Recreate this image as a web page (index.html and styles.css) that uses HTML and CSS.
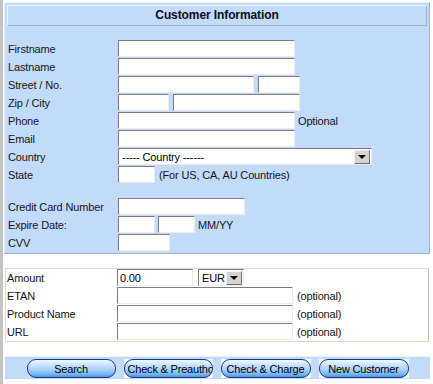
FILE: index.html
```html
<!DOCTYPE html>
<html>
<head>
<meta charset="utf-8">
<link rel="stylesheet" href="styles.css">
</head>
<body>
<div class="page">
  <div class="panel-blue">
    <div class="header">Customer Information</div>
    <div class="form">
      <div class="row"><span class="label">Firstname</span><span class="inp w177"></span></div>
      <div class="row"><span class="label">Lastname</span><span class="inp w177"></span></div>
      <div class="row"><span class="label">Street / No.</span><span class="inp w136"></span><span class="inp w42 gap4"></span></div>
      <div class="row"><span class="label">Zip / City</span><span class="inp w51"></span><span class="inp w127 gap4"></span></div>
      <div class="row"><span class="label">Phone</span><span class="inp w177"></span><span class="note n3">Optional</span></div>
      <div class="row"><span class="label">Email</span><span class="inp w177"></span></div>
      <div class="row"><span class="label">Country</span><span class="sel w254"><span class="sel-text">----- Country ------</span><span class="drop"><span class="tri"></span></span></span></div>
      <div class="row"><span class="label">State</span><span class="inp w37"></span><span class="note n4">(For US, CA, AU Countries)</span></div>
      <div class="spacer"></div>
      <div class="row"><span class="label">Credit Card Number</span><span class="inp w127"></span></div>
      <div class="row"><span class="label">Expire Date:</span><span class="inp w37"></span><span class="inp w37 gap3"></span><span class="note n3">MM/YY</span></div>
      <div class="row"><span class="label">CVV</span><span class="inp w52"></span></div>
    </div>
  </div>

  <div class="panel-white">
    <div class="row"><span class="label">Amount</span><span class="inp w76 val">0.00</span><span class="sel w46 gap5"><span class="sel-text">EUR</span><span class="drop"><span class="tri"></span></span></span></div>
    <div class="row"><span class="label">ETAN</span><span class="inp w176"></span><span class="note n4">(optional)</span></div>
    <div class="row"><span class="label">Product Name</span><span class="inp w176"></span><span class="note n4">(optional)</span></div>
    <div class="row"><span class="label">URL</span><span class="inp w176"></span><span class="note n4">(optional)</span></div>
  </div>

  <div class="bar">
    <span class="btn plain w89"><span class="pill">Search</span></span>
    <span class="btn w89"><span class="pill clip"><span class="clip-text">Check &amp; Preauthor</span></span></span>
    <span class="btn w90"><span class="pill">Check &amp; Charge</span></span>
    <span class="btn w90"><span class="pill">New Customer</span></span>
  </div>
</div>
</body>
</html>
```

FILE: styles.css
```css
* { box-sizing: border-box; }
html, body { margin: 0; padding: 0; background: #fff; }
body {
  font-family: "Liberation Sans", Arial, sans-serif;
  font-size: 11px;
  letter-spacing: -0.15px;
  color: #141414;
}
.page {
  width: 433px;
  height: 384px;
  overflow: hidden;
  border-left: 3px solid #c4c4c4;
  padding-top: 2px;
  display: flex;
  flex-direction: column;
}
.panel-blue {
  margin-left: 1px;
  width: 426px;
  background: #c3dbfb;
  border: 1px solid;
  border-color: #e6f2ff #9fb4d0 #9fb4d0 #e6f2ff;
  padding: 2px 2px 1px 2px;
}
.header {
  height: 21px;
  border: 1px solid;
  border-color: #eef6ff #98aecb #98aecb #eef6ff;
  text-align: center;
  font-weight: bold;
  font-size: 12px;
  letter-spacing: -0.1px;
  line-height: 19px;
  color: #0c0c1e;
}
.form {
  margin-top: 14px;
  padding-left: 1px;
}
.row {
  display: flex;
  align-items: flex-start;
  height: 18px;
}
.label {
  width: 110px;
  flex: none;
  line-height: 17px;
  padding-top: 1px;
  white-space: nowrap;
}
.spacer { height: 14px; }
.inp {
  display: block;
  flex: none;
  height: 17px;
  background: #fff;
  border: 1px solid;
  border-color: #7c7c7c #ececec #ececec #7c7c7c;
}
.val {
  line-height: 16px;
  padding-left: 2px;
  color: #000;
}
.gap3 { margin-left: 3px; }
.gap4 { margin-left: 4px; }
.gap5 { margin-left: 5px; }
.w37 { width: 37px; }
.w42 { width: 42px; }
.w46 { width: 46px; }
.w51 { width: 51px; }
.w52 { width: 52px; }
.w76 { width: 76px; }
.w127 { width: 127px; }
.w136 { width: 136px; }
.w176 { width: 176px; }
.w177 { width: 177px; }
.w254 { width: 254px; }
.note {
  line-height: 17px;
  padding-top: 1px;
  white-space: nowrap;
}
.n3 { margin-left: 3px; }
.n4 { margin-left: 4px; }
.sel {
  display: flex;
  align-items: center;
  justify-content: space-between;
  flex: none;
  height: 17px;
  background: #fff;
  border: 1px solid;
  border-color: #7c7c7c #ececec #ececec #7c7c7c;
  padding: 0 1px 0 3px;
  color: #000;
}
.sel-text { line-height: 15px; padding-top: 1px; white-space: nowrap; }
.drop {
  width: 16px;
  height: 14px;
  background: #d6d3ce;
  border: 1px solid;
  border-color: #f4f4f4 #6e6e6e #6e6e6e #f4f4f4;
  display: flex;
  align-items: center;
  justify-content: center;
}
.tri {
  width: 0;
  height: 0;
  border-left: 4px solid transparent;
  border-right: 4px solid transparent;
  border-top: 4px solid #000;
  margin-top: 1px;
}
.panel-white {
  margin-top: 14px;
  margin-left: 2px;
  width: 424px;
  background: #fff;
  border: 1px solid #f3d4b8;
  border-right-color: #dbbfa6;
  padding: 0 1px;
}
.bar {
  margin-top: 14px;
  margin-left: 2px;
  width: 425px;
  height: 23px;
  background: #c3dbfb;
  border-top: 1px solid #e6f2ff;
  padding-top: 2px;
  display: flex;
  justify-content: center;
  align-items: flex-start;
  gap: 8px;
}
.btn {
  display: block;
  height: 19px;
  background: #f4f9ff;
}
.btn.plain { background: transparent; }
.w89 { width: 89px; }
.w90 { width: 90px; }
.pill {
  display: flex;
  align-items: center;
  justify-content: center;
  width: 100%;
  height: 100%;
  border: 1px solid #1c3a78;
  border-radius: 9px;
  background: linear-gradient(to bottom, #f2f9ff 0%, #cfe6ff 25%, #a9d2fb 55%, #73b3f3 85%, #4d92e4 100%);
  color: #000;
  font-size: 11px;
  letter-spacing: -0.2px;
  padding-top: 1px;
  white-space: nowrap;
  overflow: hidden;
}
.pill.clip {
  justify-content: flex-start;
  padding-left: 3px;
}
.clip-text {
  display: block;
  overflow: hidden;
  max-width: 84px;
}
```
